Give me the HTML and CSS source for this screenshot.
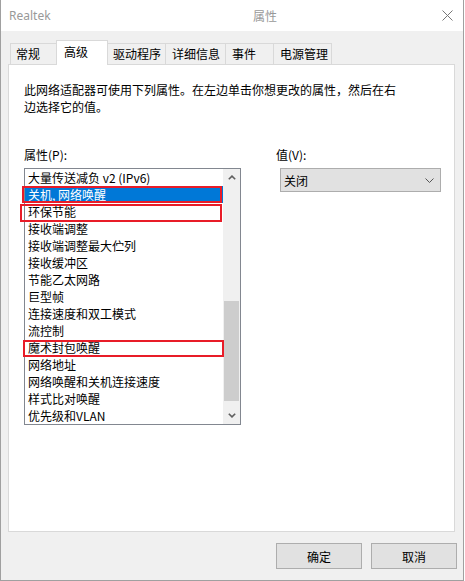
FILE: index.html
```html
<!DOCTYPE html>
<html lang="zh-CN">
<head>
<meta charset="utf-8">
<title>Realtek 属性</title>
<link rel="stylesheet" href="styles.css">
</head>
<body>
<div class="window">
  <div class="titlebar">
    <span class="app">Realtek</span>
    <span class="title">属性</span>
    <svg class="close" width="11" height="11" viewBox="0 0 11 11"><path d="M0.5 0.5 L10.5 10.5 M10.5 0.5 L0.5 10.5" stroke="#777" stroke-width="1" fill="none"/></svg>
  </div>
  <div class="body">
    <div class="tabs">
      <div class="tab t1">常规</div>
      <div class="tab t2 active">高级</div>
      <div class="tab t3">驱动程序</div>
      <div class="tab t4">详细信息</div>
      <div class="tab t5">事件</div>
      <div class="tab t6">电源管理</div>
    </div>
    <div class="panel">
      <p class="desc">此网络适配器可使用下列属性。在左边单击你想更改的属性，然后在右边选择它的值。</p>
      <div class="fields">
        <div class="col-left">
          <div class="label">属性(P):</div>
          <div class="listbox">
            <ul class="items">
              <li>大量传送减负 v2 (IPv6)</li>
              <li class="selected">关机, 网络唤醒</li>
              <li>环保节能</li>
              <li>接收端调整</li>
              <li>接收端调整最大伫列</li>
              <li>接收缓冲区</li>
              <li>节能乙太网路</li>
              <li>巨型帧</li>
              <li>连接速度和双工模式</li>
              <li>流控制</li>
              <li>魔术封包唤醒</li>
              <li>网络地址</li>
              <li>网络唤醒和关机连接速度</li>
              <li>样式比对唤醒</li>
              <li>优先级和VLAN</li>
            </ul>
            <div class="scrollbar">
              <div class="arrow"><svg width="8" height="5" viewBox="0 0 8 5"><path d="M0.8 4.3 L4 1.1 L7.2 4.3" stroke="#606060" stroke-width="1.6" fill="none"/></svg></div>
              <div class="track"><div class="thumb"></div></div>
              <div class="arrow"><svg width="8" height="5" viewBox="0 0 8 5"><path d="M0.8 0.7 L4 3.9 L7.2 0.7" stroke="#606060" stroke-width="1.6" fill="none"/></svg></div>
            </div>
            <div class="mark m1"></div>
            <div class="mark m2"></div>
            <div class="mark m3"></div>
          </div>
        </div>
        <div class="col-right">
          <div class="label">值(V):</div>
          <div class="combo">
            <span>关闭</span>
            <svg width="9" height="5" viewBox="0 0 9 5"><path d="M0.5 0.5 L4.5 4.5 L8.5 0.5" stroke="#555" stroke-width="1" fill="none"/></svg>
          </div>
        </div>
      </div>
    </div>
    <div class="footer">
      <button class="btn">确定</button>
      <button class="btn">取消</button>
    </div>
  </div>
</div>
</body>
</html>
```

FILE: styles.css
```css
* { box-sizing: border-box; }
html, body { margin: 0; padding: 0; background: #ffffff; }
body {
  font-family: "Noto Sans CJK SC", "Noto Sans", sans-serif;
  font-size: 12px;
  color: #000;
}
.window {
  width: 464px;
  height: 581px;
  border-left: 1px solid #a0a0a0;
  border-right: 1px solid #a0a0a0;
  border-bottom: 1px solid #a0a0a0;
  background: #f0f0f0;
  display: flex;
  flex-direction: column;
}
.titlebar {
  height: 31px;
  background: #fff;
  display: flex;
  align-items: center;
  color: #999;
  flex: none;
}
.app {
  font-family: "Noto Sans", "Noto Sans CJK SC", sans-serif;
  font-size: 12px;
  margin-left: 8px;
  width: 244px;
}
.title {
  font-size: 12px;
  width: 189px;
}
.close { display: block; margin-top: -1px; }
.body {
  flex: 1;
  display: flex;
  flex-direction: column;
  padding-top: 9px;
}
.tabs {
  display: flex;
  align-items: flex-start;
  height: 25px;
  padding-left: 9px;
  position: relative;
  z-index: 1;
}
.tab {
  height: 21px;
  margin-top: 3px;
  border: 1px solid #d9d9d9;
  border-bottom: none;
  background: #f0f0f0;
  line-height: 19px;
  padding-left: 5px;
  white-space: nowrap;
}
.tab + .tab { margin-left: -1px; }
.t1 { width: 47px; }
.t2 { width: 52px; }
.t3 { width: 59px; }
.t4 { width: 61px; padding-left: 6px; }
.t5 { width: 49px; padding-left: 6px; }
.t6 { width: 59px; padding-left: 6px; }
.tab.active {
  height: 25px;
  margin-top: 0;
  background: #fff;
  padding-left: 7px;
  line-height: 22px;
  position: relative;
  z-index: 2;
}
.panel {
  margin: -1px 8px 0 7px;
  height: 468px;
  background: #fff;
  border: 1px solid #d9d9d9;
  padding: 16px 0 0 15px;
  flex: none;
}
.desc {
  margin: 0;
  width: 378px;
  line-height: 17px;
}
.fields {
  display: flex;
  margin-top: 31px;
}
.label {
  line-height: 17px;
  height: 17px;
  margin-bottom: 5px;
}
.col-left { width: 217px; }
.col-right { margin-left: 35px; }
.listbox {
  position: relative;
  width: 217px;
  height: 257px;
  border: 1px solid #828790;
  display: flex;
}
.items {
  list-style: none;
  margin: 0;
  padding: 0;
  flex: 1;
}
.items li {
  height: 17px;
  line-height: 17px;
  padding-left: 3px;
  white-space: nowrap;
}
.items li.selected {
  background: #0078d7;
  color: #fff;
}
.scrollbar {
  width: 17px;
  background: #f0f0f0;
  display: flex;
  flex-direction: column;
  flex: none;
}
.arrow {
  height: 17px;
  display: flex;
  align-items: center;
  justify-content: center;
  flex: none;
}
.arrow svg { display: block; }
.track { flex: 1; padding-top: 115px; }
.thumb {
  height: 100px;
  margin: 0 1px;
  background: #cdcdcd;
}
.mark {
  position: absolute;
  border: 2px solid #e81c28;
}
.m1 { left: -3px; top: 17px; width: 200px; height: 17px; }
.m2 { left: -5px; top: 35px; width: 202px; height: 18px; }
.m3 { left: -2px; top: 171px; width: 201px; height: 17px; }
.combo {
  margin-left: 4px;
  width: 161px;
  height: 24px;
  background: #e1e1e1;
  border: 1px solid #adadad;
  display: flex;
  align-items: center;
  justify-content: space-between;
  padding: 0 6px 0 3px;
}
.combo svg { display: block; }
.footer {
  display: flex;
  justify-content: flex-end;
  gap: 9px;
  padding: 11px 6px 0 0;
}
.btn {
  width: 86px;
  height: 26px;
  background: #e1e1e1;
  border: 1px solid #adadad;
  font-family: "Noto Sans CJK SC", "Noto Sans", sans-serif;
  font-size: 12px;
  color: #000;
  padding: 0;
  margin: 0;
}
```
